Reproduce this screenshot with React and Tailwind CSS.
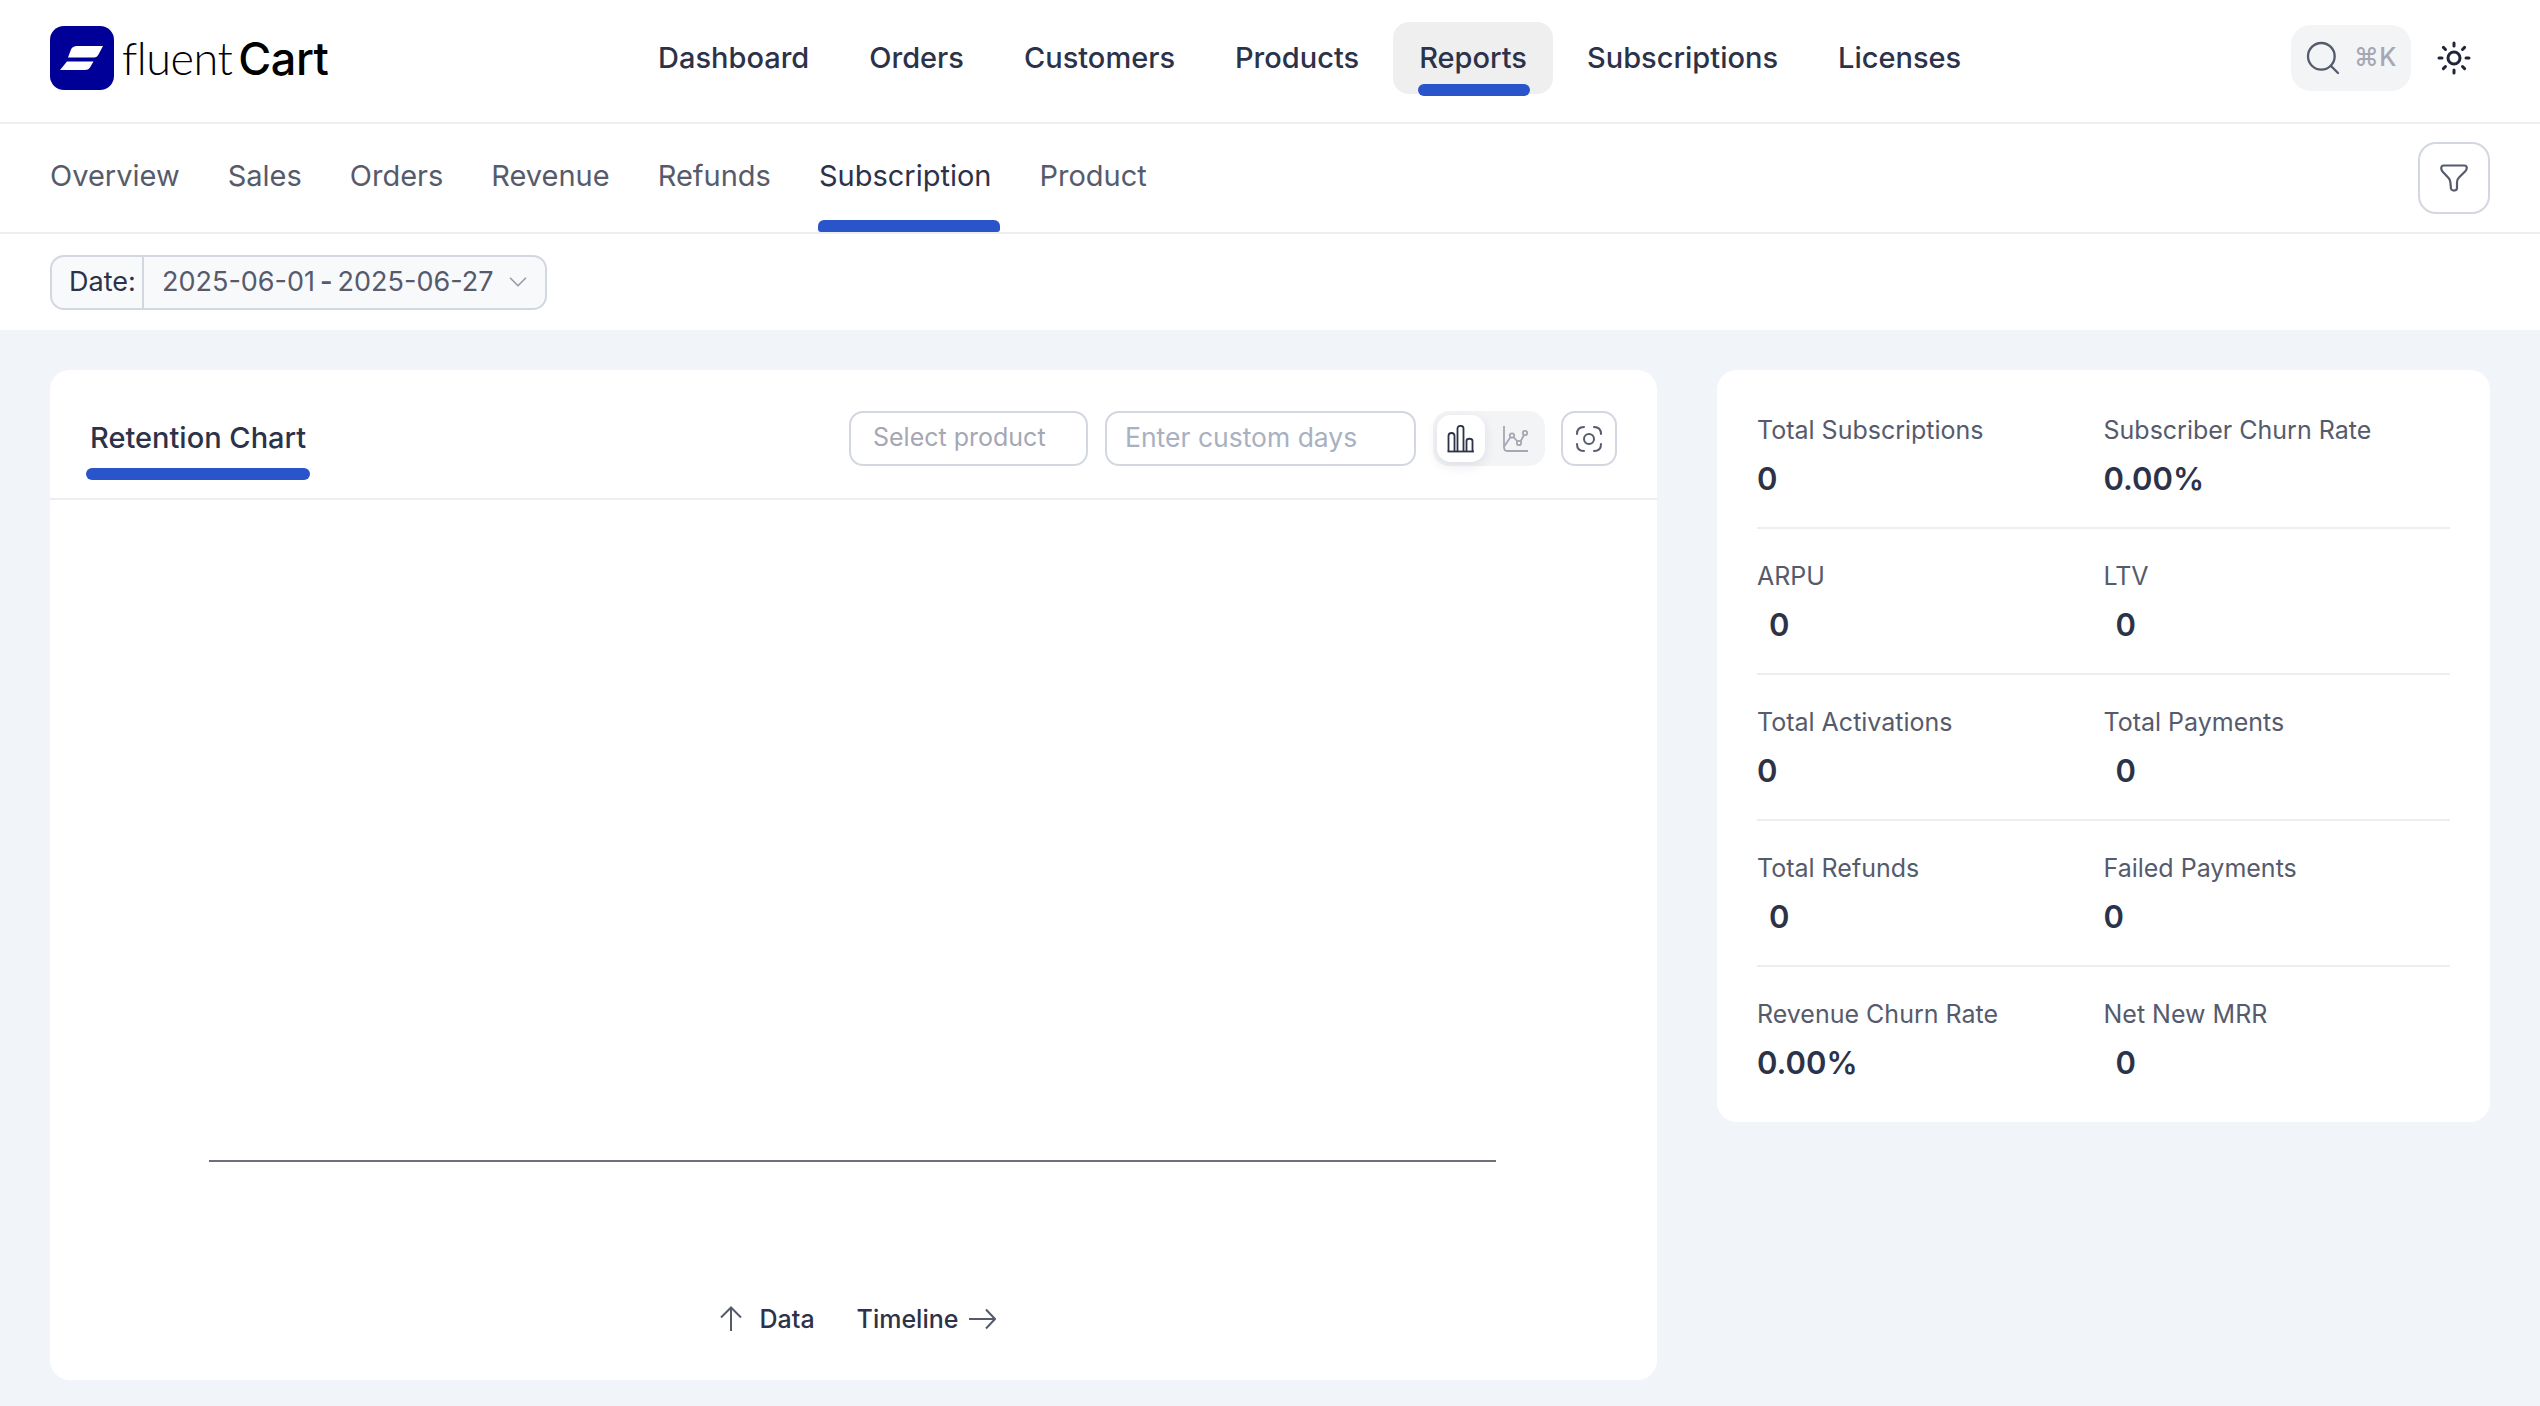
import React from 'react';
import { ChevronDown, Search, Sun } from 'lucide-react';

const mainNav = ['Dashboard', 'Orders', 'Customers', 'Products', 'Reports', 'Subscriptions', 'Licenses'];
const subNav = ['Overview', 'Sales', 'Orders', 'Revenue', 'Refunds', 'Subscription', 'Product'];

const stats = [
  [{ label: 'Total Subscriptions', value: '0' }, { label: 'Subscriber Churn Rate', value: '0.00%' }],
  [{ label: 'ARPU', value: '0', offset: true }, { label: 'LTV', value: '0', offset: true }],
  [{ label: 'Total Activations', value: '0' }, { label: 'Total Payments', value: '0', offset: true }],
  [{ label: 'Total Refunds', value: '0', offset: true }, { label: 'Failed Payments', value: '0' }],
  [{ label: 'Revenue Churn Rate', value: '0.00%' }, { label: 'Net New MRR', value: '0', offset: true }],
];

function Logo() {
  return (
    <div className="flex items-center w-[582px] shrink-0 mt-[-6px]">
      <svg width="64" height="64" viewBox="0 0 64 64">
        <rect width="64" height="64" rx="14" fill="#000099" />
        <path d="M53 20H27c-3 0-5 1.500-6 3.500L18 31.500H44c2 0 3.500-1 4.500-3z" fill="#fff" />
        <path d="M17 35.500H43.500L40 41.500c-1 1.700-3 2.500-5 2.500H10z" fill="#fff" />
      </svg>
      <div className="ml-[8px] flex items-baseline font-['Lato',sans-serif] text-[45px] leading-none text-black tracking-[-0.5px]">
        <span className="font-light">fluent</span>
        <span className="ml-[6px] font-['Inter',sans-serif] font-medium text-[45px]">Cart</span>
      </div>
    </div>
  );
}

function Header() {
  return (
    <header className="h-[124px] flex items-center px-[50px] border-b-2 border-[#eceef2]">
      <Logo />
      <nav className="flex items-center gap-[8px]">
        {mainNav.map((item) => (
          <a
            key={item}
            className={
              item === 'Reports'
                ? 'relative h-[72px] mt-[-6px] px-[26px] flex items-center rounded-[16px] bg-[#efefef] text-[29px] font-medium text-[#2c3249]'
                : 'h-[72px] mt-[-6px] px-[26px] flex items-center text-[29px] font-medium text-[#2c3249]'
            }
          >
            {item}
            {item === 'Reports' && (
              <span className="absolute left-[25px] right-[23px] bottom-[-2px] h-[12px] rounded-full bg-[#2a54c9]" />
            )}
          </a>
        ))}
      </nav>
      <div className="ml-auto flex items-center mt-[-6px] mr-[18px]">
        <div className="w-[120px] h-[66px] rounded-[20px] bg-[#f3f4f6] flex items-center pl-[12px]">
          <Search size={40} strokeWidth={1.4} className="text-[#565b6c]" />
          <span className="ml-[11px] text-[25px] text-[#a5a7b4] font-medium tracking-[0.5px]">⌘K</span>
        </div>
        <Sun size={36} strokeWidth={2} className="ml-[25px] text-[#1f2437]" />
      </div>
    </header>
  );
}

function SubNav() {
  return (
    <div className="h-[110px] flex items-center px-[50px] border-b-2 border-[#eceef2]">
      <div className="flex h-full gap-[48px]">
        {subNav.map((item) => (
          <a
            key={item}
            className={
              item === 'Subscription'
                ? 'relative flex items-center pb-[4px] text-[29px] text-[#2c3249]'
                : 'flex items-center pb-[4px] text-[29px] text-[#565b6c]'
            }
          >
            {item}
            {item === 'Subscription' && (
              <span className="absolute left-[-1px] right-[-8px] bottom-[0px] h-[12px] rounded-t-[6px] rounded-b-[3px] bg-[#2a54c9]" />
            )}
          </a>
        ))}
      </div>
      <button className="ml-auto w-[72px] h-[72px] rounded-[18px] border-2 border-[#d3d7e0] flex items-center justify-center">
        <svg width="28" height="28" viewBox="0 0 28 28" fill="none" stroke="#565b6c" strokeWidth="2.200" strokeLinejoin="round">
          <path d="M3.500 1.500H24.500C27 1.500 27.500 4.500 25.500 7L19 13.500C17.500 15 17 16 17 18V24C17 27 12 27.500 11 24.500C10.500 22 11 17 9 14.500L2.500 7.500C0.500 5 1 1.500 3.500 1.500Z" />
        </svg>
      </button>
    </div>
  );
}

function DateBar() {
  return (
    <div className="h-[96px] flex items-center px-[50px]">
      <div className="w-[497px] h-[55px] rounded-[14px] border-2 border-[#d3d7e0] bg-[#f8f9fb] flex items-center text-[27px]">
        <span className="w-[92px] h-full flex items-center pl-[17px] border-r-2 border-[#d3d7e0] text-[#2c3249]">Date:</span>
        <span className="ml-[18px] flex gap-[5px] whitespace-nowrap text-[#565b6c]">
          <span>2025-06-01</span>
          <span className="font-semibold">-</span>
          <span>2025-06-27</span>
        </span>
        <ChevronDown size={30} strokeWidth={1.4} className="ml-auto mr-[12px] text-[#9a9eab]" />
      </div>
    </div>
  );
}

function BarIcon() {
  return (
    <svg width="28" height="28" viewBox="0 0 28 28" fill="none" stroke="#2c3249" strokeWidth="1.800">
      <path d="M0.500 26.500H27" />
      <path d="M1.500 26V11C1.500 7 7.500 7 7.500 11V26" />
      <path d="M10.500 26V3.500C10.500 0 16.500 0 16.500 3.500V26" />
      <path d="M19.500 26V16C19.500 13 25.500 13 25.500 16V26" />
    </svg>
  );
}

function LineIcon() {
  return (
    <svg width="28" height="28" viewBox="0 0 28 28" fill="none" stroke="#a5a7b4" strokeWidth="1.800">
      <path d="M2 1V22C2 24.500 3 26 5 26H26" />
      <path d="M2.500 21L8.500 12M11.500 12L15.500 16.500M18.500 16.500L22 10" />
      <circle cx="10" cy="10.500" r="2.200" />
      <circle cx="17" cy="18" r="2.200" />
      <circle cx="23" cy="8" r="2.200" />
    </svg>
  );
}

function FocusIcon() {
  return (
    <svg width="28" height="28" viewBox="0 0 28 28" fill="none" stroke="#565b6c" strokeWidth="2" strokeLinecap="round">
      <path d="M2 9C2 4 4 2 9 2M19 2C24 2 26 4 26 9M26 19C26 24 24 26 19 26M9 26C4 26 2 24 2 19" />
      <circle cx="14" cy="14" r="5" />
    </svg>
  );
}

function ChartCard() {
  return (
    <section className="w-[1607px] h-[1010px] shrink-0 rounded-[20px] bg-white flex flex-col">
      <div className="h-[130px] flex items-start border-b-2 border-[#eceef2] px-[36px] relative">
        <div className="relative h-full flex items-center pt-[8px] w-[224px]">
          <h2 className="pl-[4px] text-[29px] font-medium text-[#2c3249]">Retention Chart</h2>
          <span className="absolute left-0 right-0 bottom-[18px] h-[12px] rounded-full bg-[#2a54c9]" />
        </div>
        <div className="ml-auto mr-[4px] mt-[41px] flex items-center">
          <input
            placeholder="Select product"
            className="w-[239px] h-[55px] rounded-[14px] border-2 border-[#d3d7e0] pl-[22px] pb-[4px] outline-none text-[25px] placeholder:text-[#a5a7b4]"
          />
          <input
            placeholder="Enter custom days"
            className="ml-[17px] w-[311px] h-[55px] rounded-[14px] border-2 border-[#d3d7e0] pl-[18px] pb-[4px] outline-none text-[26.500px] placeholder:text-[#a8b0c1]"
          />
          <div className="ml-[17px] w-[112px] h-[55px] rounded-[16px] bg-[#f3f4f6] flex items-center pl-[4px]">
            <div className="w-[48px] h-[47px] rounded-[14px] bg-white shadow-[0_4px_12px_rgba(30,40,70,0.1)] flex items-center justify-center">
              <BarIcon />
            </div>
            <div className="ml-[17px]">
              <LineIcon />
            </div>
          </div>
          <button className="ml-[16px] w-[56px] h-[55px] rounded-[14px] border-2 border-[#d3d7e0] flex items-center justify-center">
            <FocusIcon />
          </button>
        </div>
      </div>
      <div className="flex-1 pl-[159px] pr-[161px]">
        <div className="h-[662px] border-b-2 border-[#6e7079]" />
      </div>
      <div className="h-[74px] flex items-start justify-center text-[25px] font-medium text-[#2c3249] pl-[8px]">
        <svg width="24" height="26" viewBox="0 0 24 26" fill="none" stroke="#565b6c" strokeWidth="2">
          <path d="M12 25V2M2 11.500L12 1.500L22 11.500" />
        </svg>
        <span className="ml-[17px] leading-[26px]">Data</span>
        <span className="ml-[42px] leading-[26px]">Timeline</span>
        <svg className="ml-[10px]" width="28" height="26" viewBox="0 0 28 26" fill="none" stroke="#565b6c" strokeWidth="2">
          <path d="M1 13H27M18 3.500L27 13L18 22.500" />
        </svg>
      </div>
    </section>
  );
}

function StatsCard() {
  return (
    <aside className="w-[773px] shrink-0 self-start rounded-[20px] bg-white px-[40px] pt-[13px] pb-[11px]">
      {stats.map((row, i) => (
        <div key={i} className={i < stats.length - 1 ? 'grid grid-cols-2 pt-[29px] pb-[28px] border-b-2 border-[#eceef2]' : 'grid grid-cols-2 pt-[29px] pb-[28px]'}>
          {row.map((stat) => (
            <div key={stat.label}>
              <div className="h-[36px] leading-[36px] text-[25px] text-[#565b6c]">{stat.label}</div>
              <div className={stat.offset ? 'mt-[11px] pl-[12px] h-[40px] leading-[40px] text-[31px] font-semibold text-[#2c3249]' : 'mt-[11px] h-[40px] leading-[40px] text-[31px] font-semibold text-[#2c3249]'}>
                {stat.value}
              </div>
            </div>
          ))}
        </div>
      ))}
    </aside>
  );
}

export default function App() {
  return (
    <div className="min-h-screen bg-white font-['Inter',sans-serif]">
      <Header />
      <SubNav />
      <DateBar />
      <main className="bg-[#f1f5f9] px-[50px] pt-[40px] pb-[26px] flex gap-[60px]">
        <ChartCard />
        <StatsCard />
      </main>
    </div>
  );
}
